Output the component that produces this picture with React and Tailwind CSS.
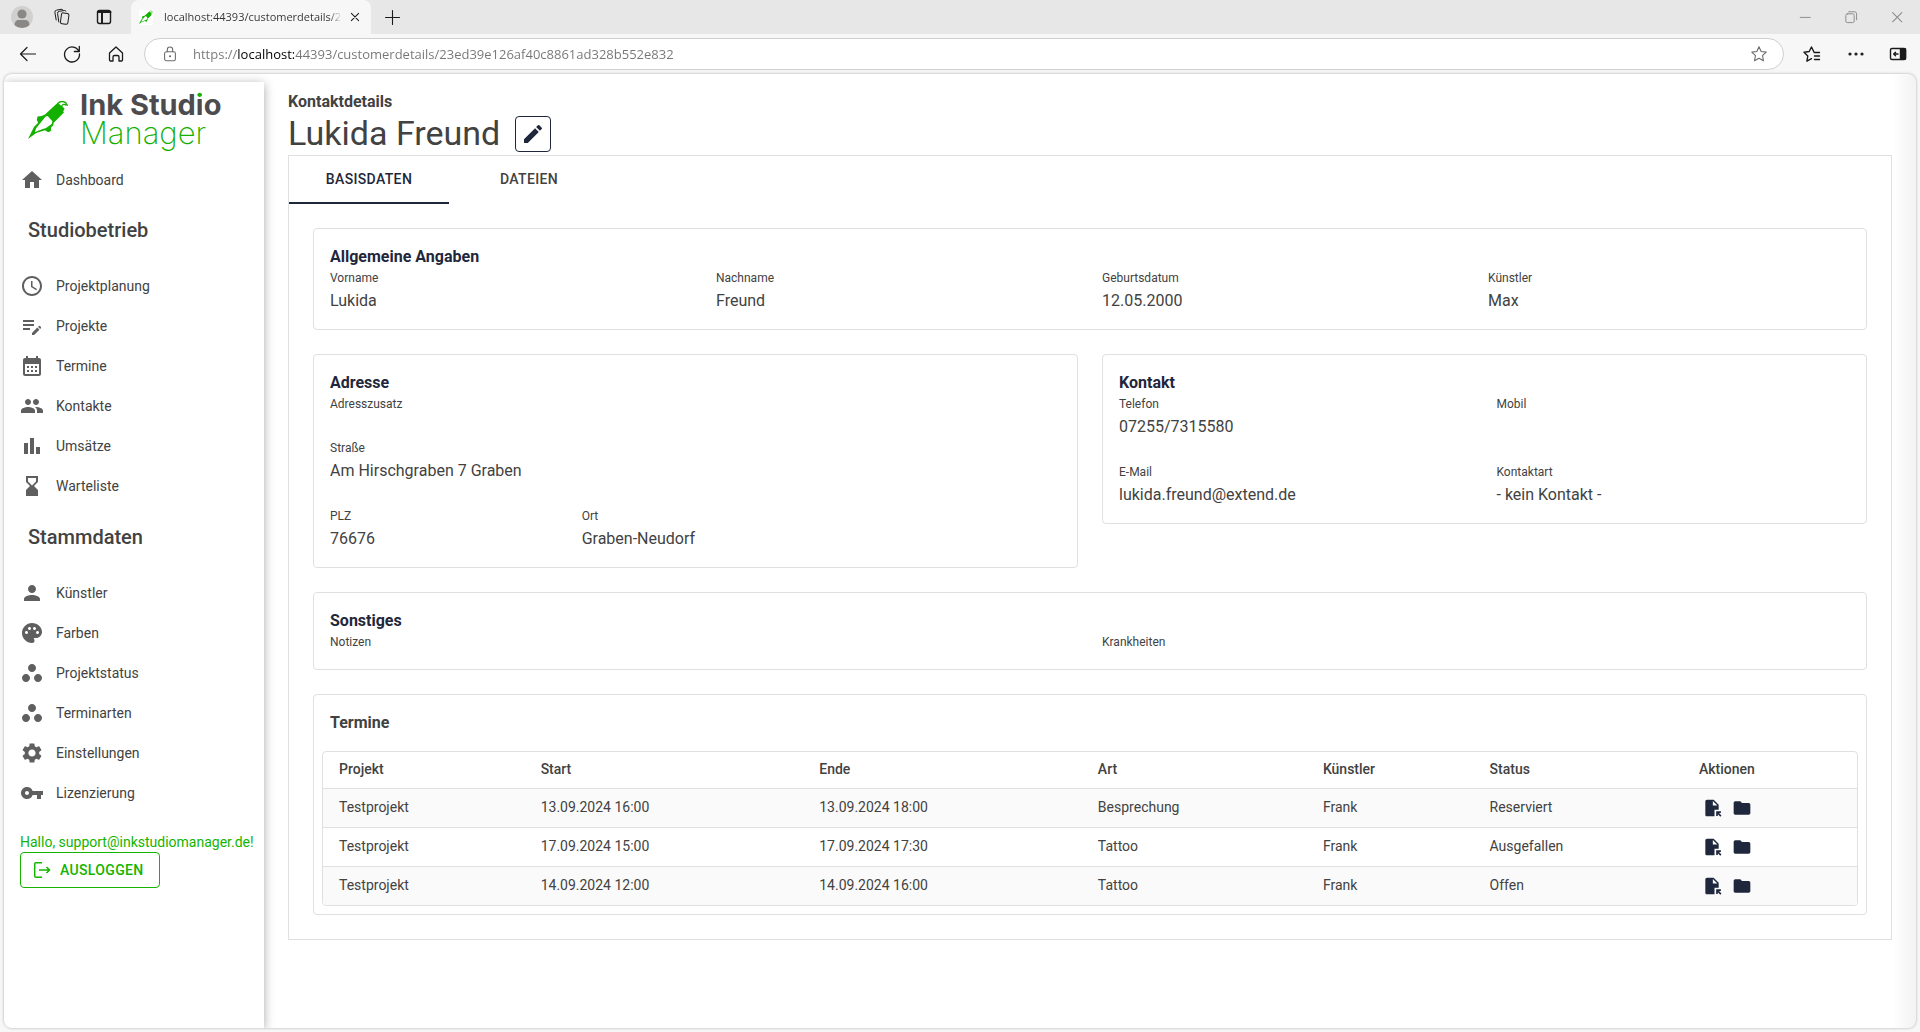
import {
  MdHome, MdSchedule, MdEditNote, MdCalendarMonth, MdPeople, MdBarChart, MdHourglassBottom,
  MdPerson, MdPalette, MdWorkspaces, MdSettings, MdVpnKey, MdEdit, MdFolder,
} from "react-icons/md";

const operations = [
  { label: "Projektplanung", Icon: MdSchedule },
  { label: "Projekte", Icon: MdEditNote },
  { label: "Termine", Icon: MdCalendarMonth },
  { label: "Kontakte", Icon: MdPeople },
  { label: "Umsätze", Icon: MdBarChart },
  { label: "Warteliste", Icon: MdHourglassBottom },
];

const masterData = [
  { label: "Künstler", Icon: MdPerson },
  { label: "Farben", Icon: MdPalette },
  { label: "Projektstatus", Icon: MdWorkspaces },
  { label: "Terminarten", Icon: MdWorkspaces },
  { label: "Einstellungen", Icon: MdSettings },
  { label: "Lizenzierung", Icon: MdVpnKey },
];

const appointments = [
  ["Testprojekt", "13.09.2024 16:00", "13.09.2024 18:00", "Besprechung", "Frank", "Reserviert"],
  ["Testprojekt", "17.09.2024 15:00", "17.09.2024 17:30", "Tattoo", "Frank", "Ausgefallen"],
  ["Testprojekt", "14.09.2024 12:00", "14.09.2024 16:00", "Tattoo", "Frank", "Offen"],
];

function Line({ children, className = "size-5", width = 1.2 }) {
  return (
    <svg viewBox="0 0 20 20" className={className} fill="none" stroke="currentColor" strokeWidth={width} strokeLinecap="round" strokeLinejoin="round" aria-hidden="true">
      {children}
    </svg>
  );
}

function TitleBar() {
  return (
    <header className="flex h-[34px] items-end bg-[#e7e7e7] text-[#1b1b1b]">
      <div className="flex h-[34px] w-[131px] shrink-0 items-center pl-[11px]">
        <button aria-label="Profil" className="size-[22px] overflow-hidden rounded-full bg-[#d2d0ce]">
          <svg viewBox="0 0 22 22" fill="#8a8886" aria-hidden="true">
            <circle cx="11" cy="8" r="4.6" />
            <path d="M3.5 19.5c0-4 2-5.5 4-5.5h7c2 0 4 1.500 4 5.500-2 1.700-4.500 2.500-7.500 2.500s-5.500-.8-7.500-2.500z" />
          </svg>
        </button>
        <button aria-label="Arbeitsbereiche" className="ml-[19px]">
          <Line width={1}>
            <rect x="9" y="6" width="7.500" height="11" rx="1.800" transform="rotate(8 12 11)" />
            <path d="M6.800 15 5.600 6.500a2 2 0 0 1 1.700-2.200l5-.8a2 2 0 0 1 1.600.6M4.200 13 2.900 5.500A2 2 0 0 1 4.500 3.200l4.500-.9a2 2 0 0 1 1.600.4" />
          </Line>
        </button>
        <button aria-label="Tabaktionen" className="ml-[22px]">
          <Line width={1.400}>
            <rect x="3.500" y="3.500" width="13" height="13" rx="2" />
            <path d="M4 5h12.500M8 6v10" strokeWidth="2" />
          </Line>
        </button>
      </div>
      <div className="flex h-[34px] w-[240px] shrink-0 items-center rounded-t-lg bg-[#f7f7f7] pl-2">
        <span className="flex h-[15px] w-[14px] items-center justify-center bg-white">
          <Machine className="h-[15px] w-[14px]" />
        </span>
        <span className="ml-[11px] w-[180px] bg-[linear-gradient(90deg,#333_165px,#f7f7f7_178px)] bg-clip-text font-['Open_Sans',sans-serif] text-[11px] leading-4 whitespace-nowrap text-transparent">
          localhost:44393/customerdetails/2
        </span>
        <button aria-label="Tab schließen" className="ml-[3px]">
          <Line className="size-4" width={1.3}><path d="m5.500 5.500 9 9m0-9-9 9" /></Line>
        </button>
      </div>
      <button aria-label="Neuer Tab" className="ml-[11px] flex h-[34px] items-center">
        <Line width={1.100}><path d="M10.500 3.500v14M3.500 10.500h14" /></Line>
      </button>
      <div className="ml-auto flex h-[34px] items-center gap-[30px] pr-[15px] text-[#8a8a8a]">
        <button aria-label="Minimieren"><Line className="size-4"><path d="M4 10.500h12.500" /></Line></button>
        <button aria-label="Wiederherstellen">
          <Line className="size-4"><rect x="3.500" y="6" width="10.500" height="11" rx="2" /><path d="M7 3.500h7.500a2.500 2.500 0 0 1 2.500 2.500v7.500" /></Line>
        </button>
        <button aria-label="Schließen"><Line className="size-4" width={1.3}><path d="m4.500 4.500 11.500 11.500M16 4.500 4.500 16" /></Line></button>
      </div>
    </header>
  );
}

function AddressBar() {
  return (
    <div className="flex h-10 items-center bg-[#f7f7f7] pr-3 pl-[18px] text-[#1b1b1b]">
      <button aria-label="Zurück"><Line><path d="M17.500 10h-15M9 3.500 2.500 10 9 16.500" /></Line></button>
      <button aria-label="Aktualisieren" className="ml-6">
        <Line width={1.3}><path d="M16.900 7.500A7.500 7.500 0 1 0 17.500 10M17.300 2.500v5h-5" /></Line>
      </button>
      <button aria-label="Startseite" className="ml-6">
        <Line width={1.3}><path d="M3.500 9 10 3l6.500 6v7a1 1 0 0 1-1 1H13v-4a1.500 1.500 0 0 0-1.500-1.500h-3A1.500 1.500 0 0 0 7 13v4H4.500a1 1 0 0 1-1-1z" /></Line>
      </button>
      <div className="ml-[18px] flex h-8 flex-1 items-center rounded-full border border-[#cfcfcf] bg-white pr-[15px] pl-4 text-[#6b6b6b]">
        <Line className="size-[18px]"><rect x="4" y="7.500" width="12" height="10" rx="2" /><path d="M7 7.500V5.200a3 3 0 0 1 6 0v2.300" /><circle cx="10" cy="12.500" r=".6" fill="currentColor" /></Line>
        <input
          aria-label="Adresse"
          defaultValue="https://localhost:44393/customerdetails/23ed39e126af40c8861ad328b552e832"
          className="ml-[14px] min-w-0 flex-1 bg-[linear-gradient(90deg,#757575_45px,#000_45px,#000_101px,#757575_101px)] bg-clip-text font-['Open_Sans',sans-serif] text-[13px] leading-5 text-transparent outline-none"
        />
        <button aria-label="Favorit hinzufügen">
          <Line className="size-[18px]"><path d="m10 2 2.400 5.200 5.600.7-4.100 3.900 1.100 5.700-5-2.800-5 2.800 1.100-5.700L2 7.900l5.600-.7z" /></Line>
        </button>
      </div>
      <button aria-label="Favoriten" className="ml-[18px]">
        <Line width={1.4}><path d="M17.500 8.500h-5.300L9.500 3 7.200 7.500 2 8.300l3.800 3.700-.9 5.200 4.600-2.500M12.500 12h5M12.500 15.500h5" /></Line>
      </button>
      <button aria-label="Einstellungen und mehr" className="ml-6">
        <Line><g fill="currentColor"><circle cx="4" cy="10" r="1" /><circle cx="10" cy="10" r="1" /><circle cx="16" cy="10" r="1" /></g></Line>
      </button>
      <button aria-label="Seitenleiste" className="ml-[22px]">
        <Line width={1.4}><rect x="2.500" y="4.500" width="15" height="11" rx="1.500" /><path d="M12.500 5h5v10h-5z" fill="currentColor" /><path d="M10 10H6M7.500 8.200 5.700 10l1.800 1.800" /></Line>
      </button>
    </div>
  );
}

function Machine({ className }) {
  return (
    <svg viewBox="0 0 118 112" className={className} aria-hidden="true">
      <g fill="#14b000">
        <path d="M0 112 18 76 30 64 26 56 28 46 40 44 50 40 82 10 88 5 98 14 108 22 104 30 106 34 76 64 74 72 68 78 68 88 60 92 50 86 24 94Z" />
      </g>
      <path fill="#fff" d="M24 80 52 46 58 44 72 60 70 68 52 80 46 82 30 88 20 92Z" />
      <path fill="none" stroke="#14b000" strokeWidth="4" d="M88 8C94-1 106 0 112 6l5 8M99 17c2-8 9-9 14-4" />
    </svg>
  );
}

function Logo() {
  return (
    <a href="#start" className="ml-6 flex items-start" aria-label="Ink Studio Manager">
      <Machine className="mt-[11px] h-[38px] w-10" />
      <span className="ml-3 block font-['Inter',sans-serif]">
        <span className="block text-[29px] leading-[30px] font-bold text-[#4d4b4e]">
          Ink Stud<span className="bg-[linear-gradient(180deg,#14b000_10px,#4d4b4e_10px)] bg-clip-text text-transparent">i</span>o
        </span>
        <span className="block text-[31px] leading-[26px] font-extralight text-[#14b000]">Manager</span>
      </span>
    </a>
  );
}

function NavItem({ label, Icon }) {
  return (
    <li>
      <a href={"#" + label.toLowerCase()} className="flex h-10 items-center gap-3 pl-4">
        <Icon className="size-6 text-[#5f5f5f]" />
        <span className="text-sm">{label}</span>
      </a>
    </li>
  );
}

function NavSection({ title, items }) {
  return (
    <section className="pb-px">
      <h2 className="flex h-[66px] items-start pt-[14px] pl-6 text-xl leading-8 font-medium">{title}</h2>
      <ul>{items.map((item) => <NavItem key={item.label} {...item} />)}</ul>
    </section>
  );
}

function Sidebar() {
  return (
    <aside className="mt-2 flex w-[260px] shrink-0 flex-col bg-white pt-2 shadow-[0_2px_10px_rgba(0,0,0,0.35)]">
      <Logo />
      <nav className="mt-[14px]">
        <ul><NavItem label="Dashboard" Icon={MdHome} /></ul>
        <NavSection title="Studiobetrieb" items={operations} />
        <NavSection title="Stammdaten" items={masterData} />
      </nav>
      <div className="mt-[18px] pl-4 text-sm whitespace-nowrap text-[#14b400]">
        <p>Hallo, support@inkstudiomanager.de!</p>
        <button className="flex h-9 w-[140px] items-center gap-2 rounded border border-[#14b400] pl-[11px] font-medium tracking-wide">
          <svg viewBox="0 0 20 20" className="size-5" fill="none" stroke="currentColor" strokeWidth="1.500" aria-hidden="true">
            <path d="M10 2.700H4A1.300 1.300 0 0 0 2.700 4v12A1.300 1.300 0 0 0 4 17.300h6M7 10h10.500M14.500 7l3 3-3 3" />
          </svg>
          AUSLOGGEN
        </button>
      </div>
    </aside>
  );
}

function Card({ title, className = "", children }) {
  return (
    <section className={"rounded border border-[#e0e0e0] p-4 " + className}>
      <h2 className="font-bold text-[#1f273c]">{title}</h2>
      {children}
    </section>
  );
}

function Field({ label, value, className = "" }) {
  return (
    <div className={className}>
      <dt className="pb-0.5 text-xs leading-[18px]">{label}</dt>
      {value && <dd>{value}</dd>}
    </div>
  );
}

function FileOpenIcon() {
  return (
    <svg viewBox="0 0 24 24" className="size-5" fill="currentColor" aria-hidden="true">
      <path d="M14 2H6c-1.100 0-2 .9-2 2v16c0 1.100.9 2 2 2h9v-8h5V8l-6-6zm-1 7V3.500L18.500 9H13zm4 12.660v-5.660h5.660v2h-2.240l2.950 2.950-1.410 1.410L19 19.410v2.240h-2z" />
    </svg>
  );
}

function AppointmentTable() {
  const head = ["Projekt", "Start", "Ende", "Art", "Künstler", "Status", "Aktionen"];
  return (
    <div className="overflow-hidden rounded border border-[#e0e0e0]">
      <table className="w-full text-left text-sm whitespace-nowrap">
        <thead>
          <tr>{head.map((h) => <th key={h} scope="col" className="h-9 px-4 pb-0.5 font-medium">{h}</th>)}</tr>
        </thead>
        <tbody>
          {appointments.map((row, i) => (
            <tr key={i} className="border-t border-[#e0e0e0] odd:bg-[#fafafa]">
              {row.map((cell, j) => <td key={j} className="h-[39px] px-4 pb-0.5">{cell}</td>)}
              <td className="px-4">
                <div className="flex gap-[10px] pl-[3px] text-[#1f273c]">
                  <button aria-label="Termin öffnen"><FileOpenIcon /></button>
                  <button aria-label="Projektordner"><MdFolder className="size-5" /></button>
                </div>
              </td>
            </tr>
          ))}
        </tbody>
      </table>
    </div>
  );
}

function Details() {
  return (
    <main className="min-w-0 flex-1 px-6 pt-4 pb-8">
      <p className="font-bold">Kontaktdetails</p>
      <div className="flex items-center gap-[15px] pb-0.5">
        <h1 className="text-[34px] leading-[39px]">Lukida Freund</h1>
        <button aria-label="Bearbeiten" className="flex size-9 items-center justify-center rounded border border-[#1f273c] text-[#1f273c]">
          <MdEdit className="size-6" />
        </button>
      </div>
      <div className="border border-[#e0e0e0]">
        <div role="tablist" className="flex h-12 text-sm font-medium tracking-wide">
          <button role="tab" aria-selected="true" className="w-40 border-b-2 border-[#1f273c] text-[#1f273c]">BASISDATEN</button>
          <button role="tab" aria-selected="false" className="w-40 border-b-2 border-transparent">DATEIEN</button>
        </div>
        <div className="flex flex-col gap-6 p-6">
          <Card title="Allgemeine Angaben">
            <dl className="grid grid-cols-4 gap-6">
              <Field label="Vorname" value="Lukida" />
              <Field label="Nachname" value="Freund" />
              <Field label="Geburtsdatum" value="12.05.2000" />
              <Field label="Künstler" value="Max" />
            </dl>
          </Card>
          <div className="grid grid-cols-2 items-start gap-6">
            <Card title="Adresse">
              <dl className="grid grid-cols-3 gap-6">
                <Field label="Adresszusatz" className="col-span-3" />
                <Field label="Straße" value="Am Hirschgraben 7 Graben" className="col-span-3" />
                <Field label="PLZ" value="76676" />
                <Field label="Ort" value="Graben-Neudorf" className="col-span-2" />
              </dl>
            </Card>
            <Card title="Kontakt">
              <dl className="grid grid-cols-2 gap-6">
                <Field label="Telefon" value="07255/7315580" />
                <Field label="Mobil" />
                <Field label="E-Mail" value="lukida.freund@extend.de" />
                <Field label="Kontaktart" value="- kein Kontakt -" />
              </dl>
            </Card>
          </div>
          <Card title="Sonstiges">
            <dl className="grid grid-cols-2 gap-6">
              <Field label="Notizen" />
              <Field label="Krankheiten" />
            </dl>
          </Card>
          <section className="rounded border border-[#e0e0e0] p-2">
            <h2 className="px-2 pt-2 pb-4 font-bold">Termine</h2>
            <AppointmentTable />
          </section>
        </div>
      </div>
    </main>
  );
}

export default function App() {
  return (
    <div className="flex min-h-screen flex-col bg-[#f7f7f7]">
      <TitleBar />
      <AddressBar />
      <div className="relative mx-1 mb-1 flex flex-1 overflow-hidden rounded-lg bg-white font-['Roboto',sans-serif] text-base text-[#424242] shadow-[0_0_3px_rgba(0,0,0,0.3)]">
        <Sidebar />
        <Details />
        <div className="pointer-events-none absolute inset-y-0 right-0 w-6 bg-linear-to-r from-transparent to-black/5" />
      </div>
    </div>
  );
}
